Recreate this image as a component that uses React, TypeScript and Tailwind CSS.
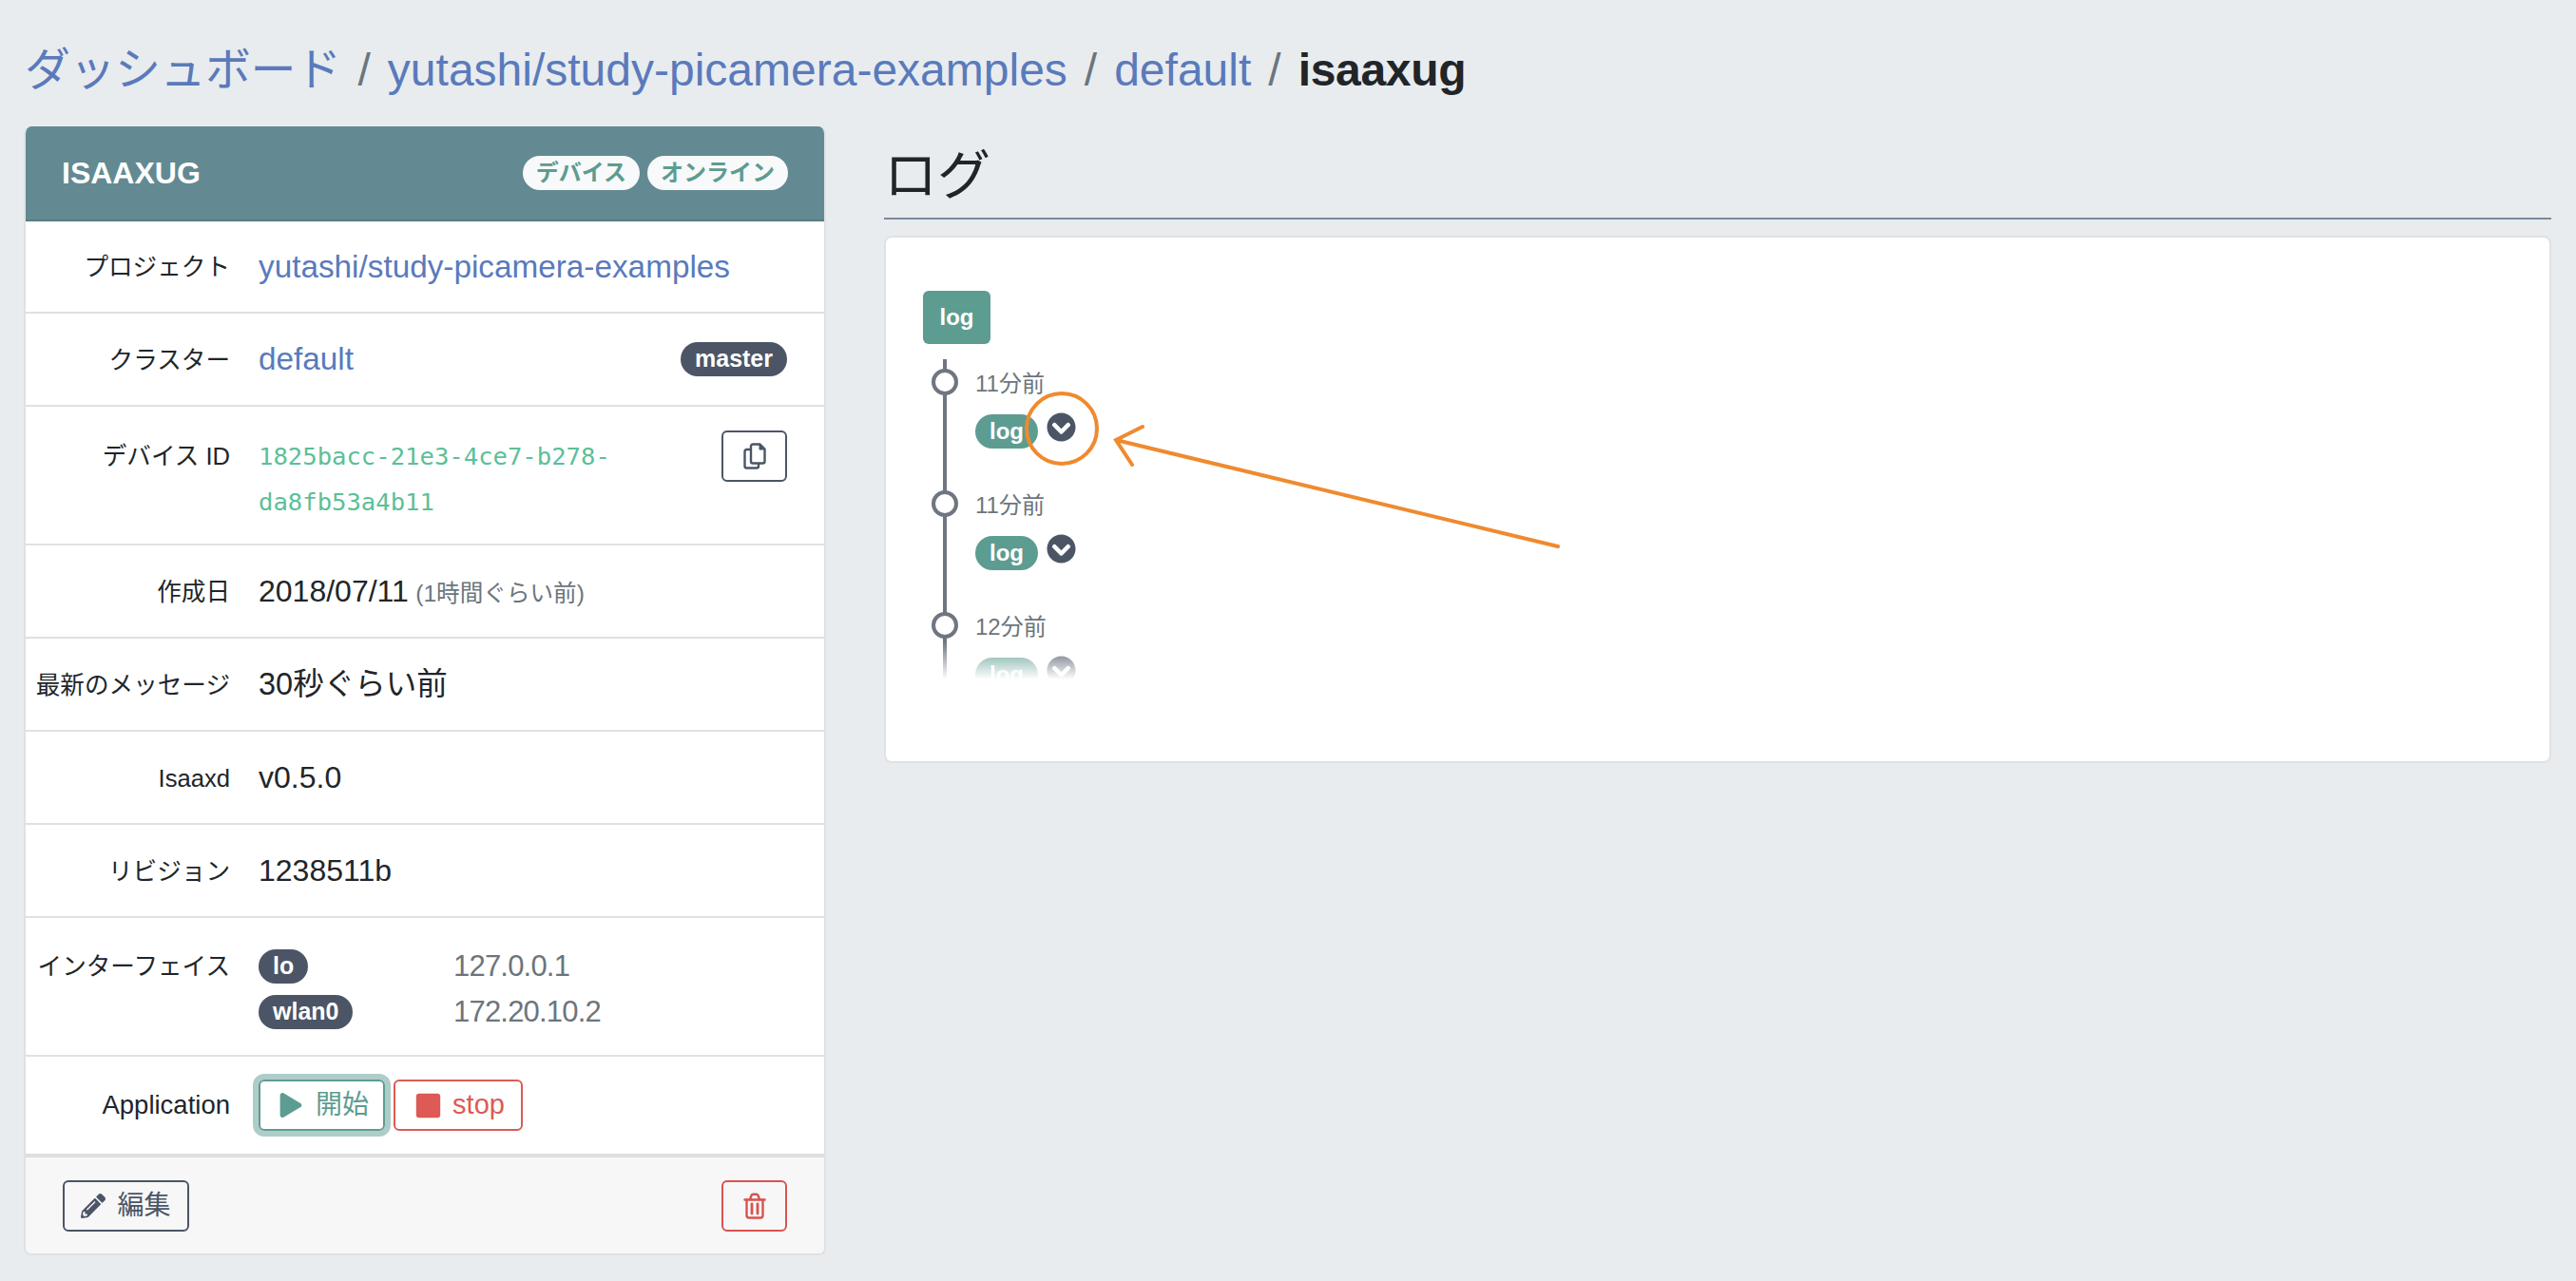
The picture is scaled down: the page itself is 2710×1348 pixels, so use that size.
import { FaChevronCircleDown, FaPencilAlt, FaPlay, FaStop } from "react-icons/fa";

const sans = "font-['Liberation_Sans','Noto_Sans_CJK_JP',sans-serif]";

const interfaces = [
  { name: "lo", ip: "127.0.0.1" },
  { name: "wlan0", ip: "172.20.10.2" },
];

const logs = [
  { time: "11分前" },
  { time: "11分前" },
  { time: "12分前" },
];

function DarkBadge({ label }: { label: string }) {
  return (
    <span className="inline-flex h-[36px] items-center rounded-full bg-[#4b5566] px-[15px] text-[25px] font-bold text-white">
      {label}
    </span>
  );
}

function CopyIcon() {
  return (
    <svg width="24" height="28" viewBox="0 0 24 28" fill="none" stroke="currentColor" strokeWidth="2.4" strokeLinejoin="round" strokeLinecap="round">
      <path d="M10 1.5h7.5l5 5v13a2 2 0 0 1-2 2H10a2 2 0 0 1-2-2V3.5a2 2 0 0 1 2-2z" />
      <path d="M17 2v5h5" fill="currentColor" strokeWidth="1" />
      <path d="M7.5 7H3.5a2 2 0 0 0-2 2v15.5a2 2 0 0 0 2 2H14a2 2 0 0 0 2-2V22" />
    </svg>
  );
}

function TrashIcon() {
  return (
    <svg width="24" height="28" viewBox="0 0 24 28" fill="none" stroke="currentColor" strokeWidth="2.4" strokeLinejoin="round" strokeLinecap="round">
      <path d="M1.5 7.5h21" />
      <path d="M7 7l1.5-4a2 2 0 0 1 1.8-1.3h3.4A2 2 0 0 1 15.500 3L17 7" />
      <path d="M3.500 7.500V24a2.500 2.500 0 0 0 2.500 2.500h12a2.500 2.500 0 0 0 2.500-2.500V7.500" />
      <path d="M9 12v10M15 12v10" strokeWidth="2.800" />
    </svg>
  );
}

function Row({
  label,
  height,
  labelClass = "",
  top,
  children,
}: {
  label: string;
  height: string;
  labelClass?: string;
  top?: boolean;
  children: React.ReactNode;
}) {
  return (
    <div className={`flex border-b-2 border-[#dfe1e3] ${height} ${top ? "items-start" : "items-center"}`}>
      <div className={`mt-[1px] w-[215px] shrink-0 text-right text-[25.6px] leading-[34px] text-[#212529] ${labelClass}`}>{label}</div>
      <div className="ml-[30px] min-w-0 flex-1 pr-[39px]">{children}</div>
    </div>
  );
}

function LogEntry({ time }: { time: string }) {
  return (
    <div className="relative h-[128px] pl-[46px] pt-[10px]">
      <span className="absolute left-0 top-[10px] h-[28px] w-[28px] rounded-full border-4 border-[#6f7680] bg-white" />
      <div className="text-[24px] leading-[32px] text-[#6c757d]">{time}</div>
      <div className="mt-[16px] flex items-start gap-[9px]">
        <span className="inline-flex h-[36px] items-center rounded-full bg-[#5d9c91] px-[15px] text-[24px] font-bold text-white">
          log
        </span>
        <FaChevronCircleDown className="mt-[-2px] text-[31px] text-[#4b5566]" />
      </div>
    </div>
  );
}

export default function App() {
  return (
    <div className={`${sans} relative h-[1348px] overflow-hidden bg-[#e8ecef] pl-[25px] pr-[26px] text-[#212529]`}>
      <h1 className="flex h-[133px] items-center gap-[18px] pl-[1px] pt-[14px] text-[48px] leading-none">
        <a className="tracking-[-0.5px] text-[#5a7abb]">ダッシュボード</a>
        <span className="text-[#6c757d]">/</span>
        <a className="text-[#5a7abb]">yutashi/study-picamera-examples</a>
        <span className="text-[#6c757d]">/</span>
        <a className="text-[#5a7abb]">default</a>
        <span className="text-[#6c757d]">/</span>
        <span className="font-bold tracking-[-0.3px]">isaaxug</span>
      </h1>

      <div className="flex items-start gap-[61px]">
        <section className="w-[844px] shrink-0 overflow-hidden rounded-[8px] border-2 border-t-0 border-[#dfe1e3] bg-white">
          <header className="flex h-[100px] items-center justify-between border-b-2 border-[#587c83] bg-[#638a92] pl-[38px] pr-[38px]">
            <span className="text-[32px] font-bold text-white">ISAAXUG</span>
            <div className="flex gap-[8px]">
              <span className="inline-flex h-[36px] items-center rounded-full bg-[#f8f9fa] px-[14px] text-[24px] font-bold text-[#5d9c91]">デバイス</span>
              <span className="inline-flex h-[36px] items-center rounded-full bg-[#f8f9fa] px-[14px] text-[24px] font-bold text-[#5d9c91]">オンライン</span>
            </div>
          </header>

          <Row label="プロジェクト" height="h-[97px]">
            <a className="text-[33.3px] text-[#5a7abb]">yutashi/study-picamera-examples</a>
          </Row>
          <Row label="クラスター" height="h-[98px]">
            <div className="flex items-center justify-between">
              <a className="text-[33.3px] text-[#5a7abb]">default</a>
              <DarkBadge label="master" />
            </div>
          </Row>
          <Row label="デバイス ID" height="h-[146px] pt-[28px]" labelClass="mt-[7px]" top>
            <div className="flex items-start justify-between">
              <div className="w-[400px] font-['DejaVu_Sans_Mono',monospace] text-[25.6px] leading-[48px] text-[#5cbf98]">
                1825bacc-21e3-4ce7-b278-da8fb53a4b11
              </div>
              <button type="button" className="mt-[-3px] flex h-[54px] w-[69px] items-center justify-center rounded-[6px] border-2 border-[#4b5566] text-[#4b5566]">
                <CopyIcon />
              </button>
            </div>
          </Row>
          <Row label="作成日" height="h-[98px]">
            <span className="text-[32px]">2018/07/11</span>{" "}
            <span className="ml-[3px] text-[24.6px] text-[#6c757d]">(1時間ぐらい前)</span>
          </Row>
          <Row label="最新のメッセージ" height="h-[98px]">
            <span className="text-[32.5px]">30秒ぐらい前</span>
          </Row>
          <Row label="Isaaxd" height="h-[98px]">
            <span className="text-[32px]">v0.5.0</span>
          </Row>
          <Row label="リビジョン" height="h-[98px]">
            <span className="text-[32px]">1238511b</span>
          </Row>
          <Row label="インターフェイス" height="h-[146px] pt-[33px]" top>
            <div className="flex flex-col gap-[12px]">
              {interfaces.map((item) => (
                <div key={item.name} className="flex items-center">
                  <div className="w-[205px] shrink-0">
                    <DarkBadge label={item.name} />
                  </div>
                  <span className="text-[31px] leading-[36px] tracking-[-0.8px] text-[#6c757d]">{item.ip}</span>
                </div>
              ))}
            </div>
          </Row>
          <div className="flex h-[102px] items-center">
            <div className="w-[215px] shrink-0 text-right text-[27.5px] text-[#212529]">Application</div>
            <div className="ml-[30px] flex gap-[9px]">
              <button type="button" className="flex h-[54px] w-[133px] items-center justify-center gap-[13px] rounded-[6px] border-2 border-[#5d9c91] pl-[4px] text-[28px] text-[#5d9c91] ring-[6px] ring-[#5d9c91]/50">
                <FaPlay className="text-[26px]" />
                開始
              </button>
              <button type="button" className="flex h-[54px] w-[136px] items-center justify-center gap-[11px] rounded-[6px] border-2 border-[#dd5a55] pl-[3px] text-[29px] text-[#dd5a55]">
                <FaStop className="text-[29px]" />
                stop
              </button>
            </div>
          </div>
          <footer className="flex h-[105px] items-center justify-between border-t-4 border-[#dfdfdf] bg-[#f7f7f7] pl-[39px] pr-[39px]">
            <button type="button" className="flex h-[54px] w-[133px] items-center justify-center gap-[12px] rounded-[6px] border-2 border-[#4b5566] text-[28px] text-[#4b5566]">
              <FaPencilAlt className="text-[26px]" />
              編集
            </button>
            <button type="button" className="flex h-[54px] w-[69px] items-center justify-center rounded-[6px] border-2 border-[#d9534f] text-[#d9534f]">
              <TrashIcon />
            </button>
          </footer>
        </section>

        <main className="min-w-0 flex-1">
          <h2 className="mt-[-27px] h-[125px] border-b-2 border-[#7c8a99] pt-[37px] text-[56px] leading-[84px]">ログ</h2>
          <section className="mt-[17px] h-[555px] rounded-[8px] border-2 border-[#dfe1e3] bg-white pl-[39px] pt-[56px]">
            <span className="flex h-[56px] w-[71px] items-center justify-center rounded-[6px] bg-[#5d9c91] text-[24px] font-bold text-white">
              log
            </span>
            <div className="relative ml-[9px] mt-[16px] h-[337px] overflow-hidden">
              <span className="absolute bottom-0 left-[12px] top-0 w-[4px] bg-[#6f7680]" />
              {logs.map((log, i) => (
                <LogEntry key={i} time={log.time} />
              ))}
              <div className="absolute inset-x-0 bottom-0 h-[40px] bg-gradient-to-b from-white/0 to-white" />
            </div>
          </section>
        </main>
      </div>

      {/* hand-drawn annotation over the screenshot */}
      <svg className="pointer-events-none absolute left-0 top-0" width="2710" height="1348" fill="none" stroke="#ef8a2f" strokeWidth="4" strokeLinecap="round">
        <circle cx="1117" cy="451" r="37" />
        <path d="M1639 575 L1174 463 M1202 449 L1174 463 L1191 489" />
      </svg>
    </div>
  );
}
